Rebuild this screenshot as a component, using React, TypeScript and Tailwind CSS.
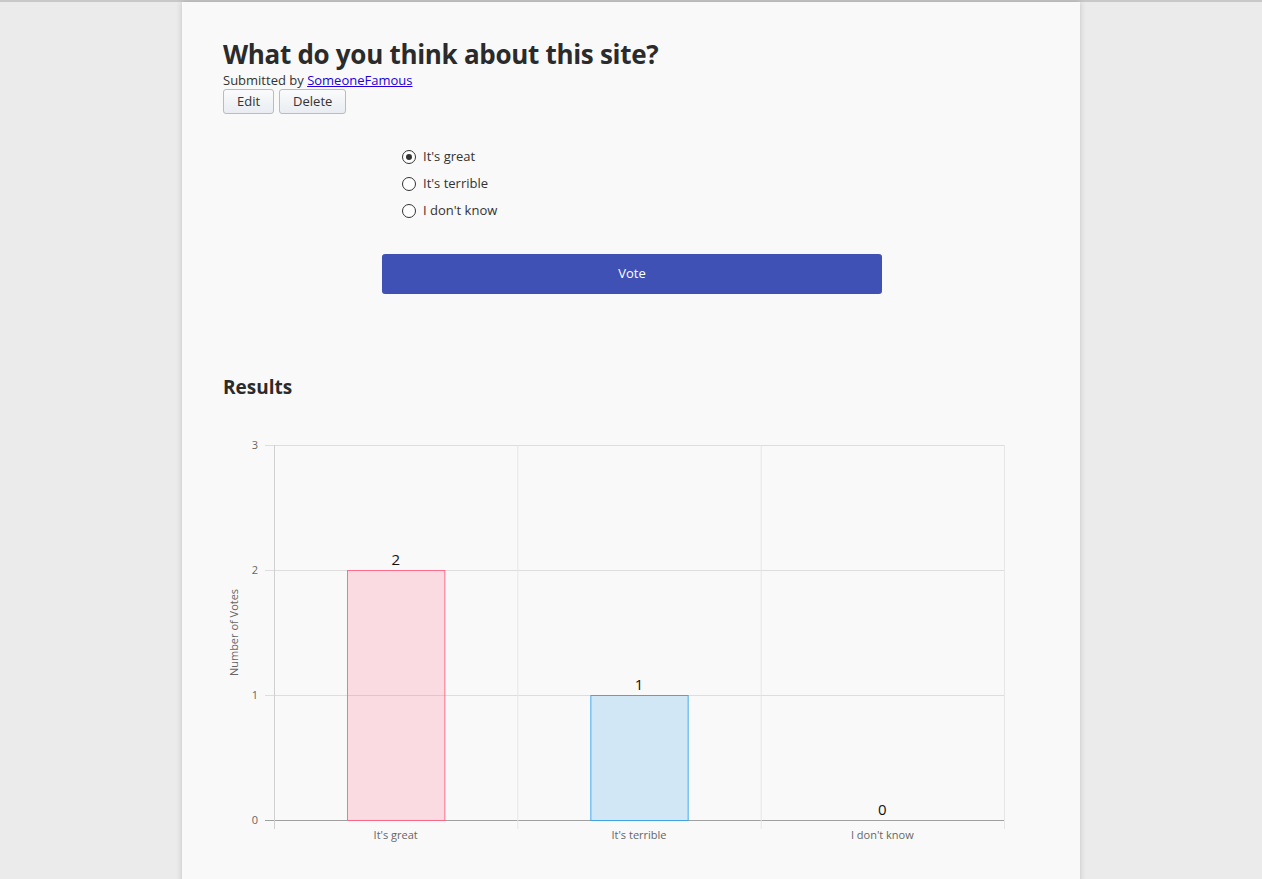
import React from "react";

const options = ["It's great", "It's terrible", "I don't know"];
const votes = [2, 1, 0];

const ResultsChart: React.FC = () => {
  const left = 51;
  const top = 11;
  const plotW = 730;
  const plotH = 375;
  const colW = plotW / 3;
  const max = 3;
  const y = (v: number) => top + plotH - (v / max) * plotH;
  const fills = [
    { fill: "rgba(255,99,132,0.2)", stroke: "rgba(255,99,132,0.9)" },
    { fill: "rgba(54,162,235,0.2)", stroke: "rgba(54,162,235,0.9)" },
    { fill: "rgba(255,206,86,0.2)", stroke: "rgba(255,206,86,0.9)" },
  ];
  return (
    <svg width="790" height="420" className="block" style={{ fontFamily: "'Open Sans', sans-serif" }}>
      {[0, 1, 2, 3].map((v) => (
        <g key={v}>
          <line x1={left - 9} x2={left + plotW} y1={y(v) + 0.5} y2={y(v) + 0.5} stroke={v === 0 ? "#a0a0a0" : "#dddddd"} />
          <text x={left - 16} y={y(v) + 4} fontSize="11" fill="#666" textAnchor="end">
            {v}
          </text>
        </g>
      ))}
      {[0, 1, 2, 3].map((i) => (
        <line
          key={i}
          x1={left + i * colW + 0.5}
          x2={left + i * colW + 0.5}
          y1={top}
          y2={top + plotH + 9}
          stroke={i === 0 ? "#d0d0d0" : "#e6e6e6"}
        />
      ))}
      {votes.map((v, i) => {
        const bw = colW * 0.4;
        const bx = left + i * colW + (colW - bw) / 2;
        return (
          <g key={i}>
            {v > 0 && (
              <rect x={bx + 0.5} y={y(v) + 0.5} width={bw} height={(v / max) * plotH} fill={fills[i].fill} stroke={fills[i].stroke} />
            )}
            <text x={bx + bw / 2} y={y(v) - 5} fontSize="15" fill="#111" textAnchor="middle">
              {v}
            </text>
            <text x={left + i * colW + colW / 2} y={top + plotH + 19} fontSize="11" fill="#666" textAnchor="middle">
              {options[i]}
            </text>
          </g>
        );
      })}
      <text
        transform={`translate(15 ${top + plotH / 2}) rotate(-90)`}
        fontSize="11"
        fill="#666"
        textAnchor="middle"
      >
        Number of Votes
      </text>
    </svg>
  );
};

export default function App() {
  return (
    <div
      className="min-h-screen bg-[#ebebeb] border-t-2 border-[#c8c8c8] text-[#333]"
      style={{ fontFamily: "'Open Sans', 'Noto Sans', sans-serif" }}
    >
      <div className="mx-auto w-[898px] min-h-[877px] bg-[#f9f9f9] shadow-[0_0_6px_rgba(0,0,0,0.18)] pl-[41px] pr-10 pt-[35px] pb-10">
        <h1 className="text-[26px] font-bold leading-[35px] text-[#2b2b2b] tracking-[-0.3px]">
          What do you think about this site?
        </h1>
        <p className="text-[13px] leading-[16px] text-[#333]">
          Submitted by{" "}
          <a href="#" className="text-[#2200dd] underline">
            SomeoneFamous
          </a>
        </p>
        <div className="flex gap-[5px] mt-[1px]">
          <button className="h-[25px] px-[13px] text-[13px] border border-[#bbb] rounded-[3px] bg-gradient-to-b from-[#fafbfc] to-[#e9edf1] text-[#333]">
            Edit
          </button>
          <button className="h-[25px] px-[13px] text-[13px] border border-[#bbb] rounded-[3px] bg-gradient-to-b from-[#fafbfc] to-[#e9edf1] text-[#333]">
            Delete
          </button>
        </div>

        <div className="ml-[179px] mt-[34px] flex flex-col gap-[10px]">
          {options.map((o, i) => (
            <label key={o} className="flex items-center gap-[7px] text-[13px] leading-[17px] text-[#333]">
              <span className="w-[14px] h-[14px] rounded-full border border-[#333] flex items-center justify-center bg-white">
                {i === 0 && <span className="w-[6px] h-[6px] rounded-full bg-[#333]" />}
              </span>
              {o}
            </label>
          ))}
        </div>

        <button className="block ml-[159px] mt-[35px] w-[500px] h-[40px] rounded-[3px] bg-[#3f51b5] text-white text-[13px]">
          Vote
        </button>

        <h2 className="mt-[80px] text-[19px] font-bold leading-[26px] text-[#2b2b2b]">Results</h2>

        <div className="mt-[34px]">
          <ResultsChart />
        </div>
      </div>
    </div>
  );
}
